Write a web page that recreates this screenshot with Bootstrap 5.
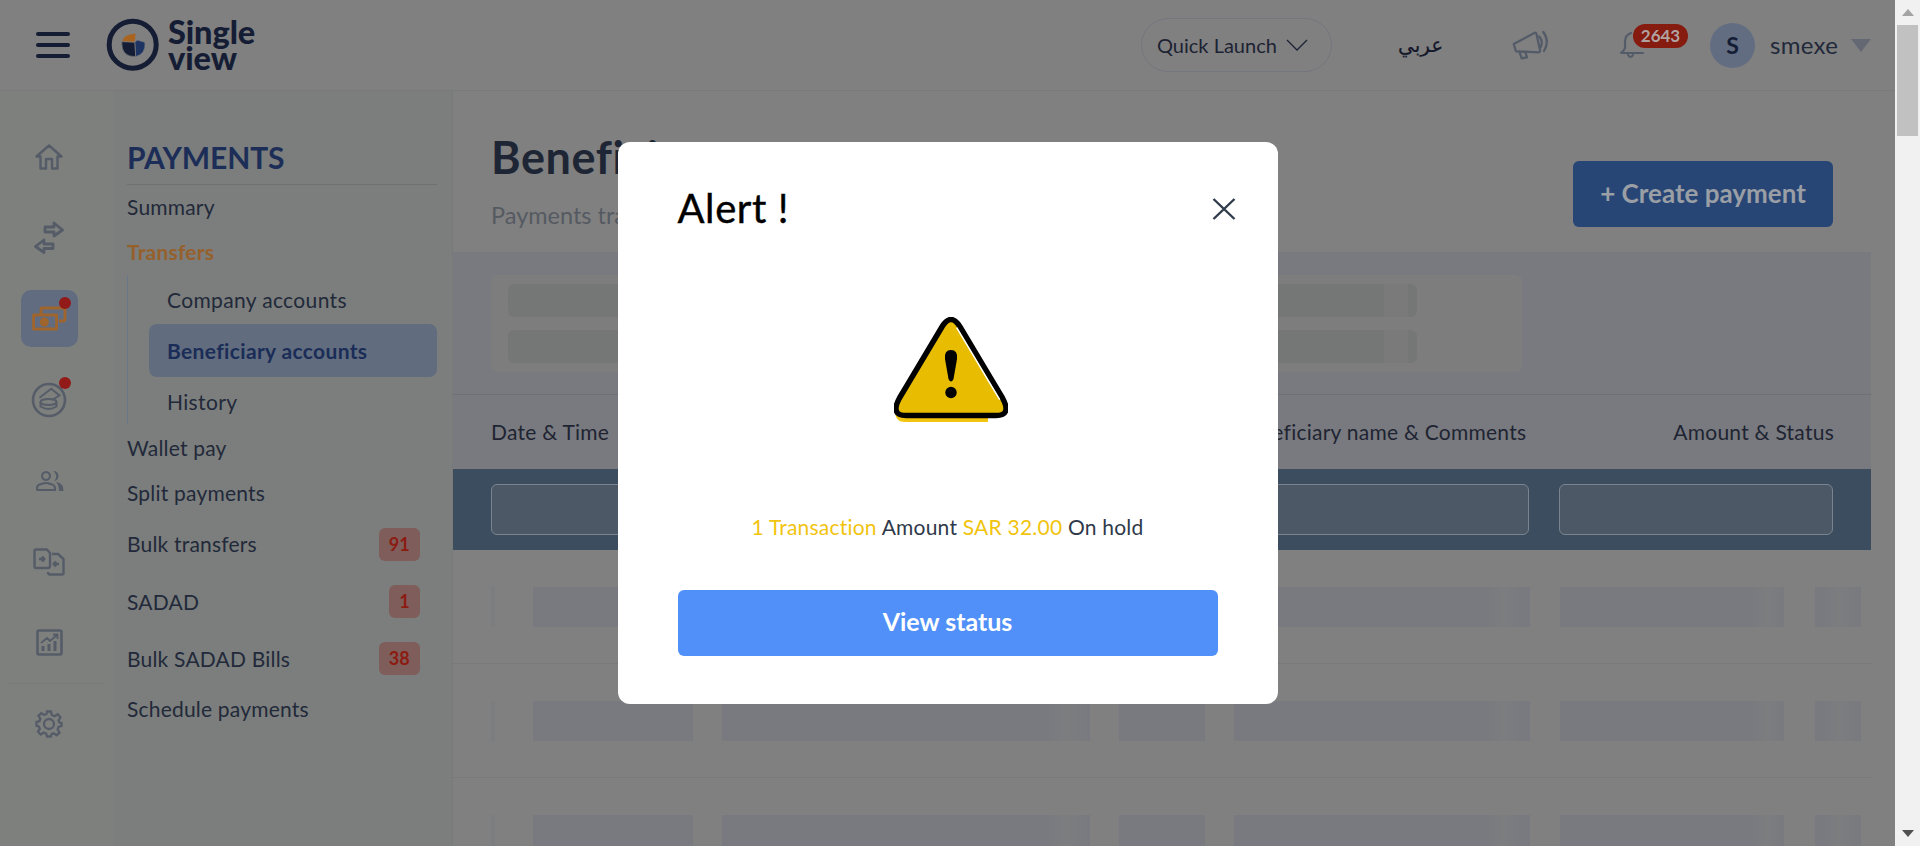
<!DOCTYPE html>
<html lang="en">
<head>
  <meta charset="UTF-8">
  <title>Beneficiary accounts</title>
  <link href="https://cdn.jsdelivr.net/npm/bootstrap@5.3.0/dist/css/bootstrap.min.css" rel="stylesheet">
  <style>
    html, body { height: 846px; overflow: hidden; }
    body { font-family: "Lato", "Open Sans", sans-serif; background: #808080; color: #22293a; }
    .app-frame { display: flex; height: 846px; }
    .app-page { width: 1895px; height: 846px; overflow: hidden; background: #808080; }

    /* fake browser scrollbar */
    .scroll-rail { width: 25px; background: #f1f1f1; display: flex; flex-direction: column; align-items: center; justify-content: space-between; padding: 9px 0; position: relative; }
    .scroll-thumb { position: absolute; top: 25px; left: 2px; width: 21px; height: 111px; background: #c1c1c1; }
    .arrow-up { width: 0; border: 6px solid transparent; border-top: 0; border-bottom: 7px solid #a3a3a3; }
    .arrow-down { width: 0; border: 6px solid transparent; border-bottom: 0; border-top: 7px solid #505050; }

    /* top bar */
    .top-bar { height: 91px; padding: 0; border-bottom: 1px solid #797b7b; background: #808080; flex-wrap: nowrap; justify-content: flex-start; }
    .burger { width: 34px; margin-left: 36px; display: flex; flex-direction: column; gap: 7px; }
    .burger span { height: 4px; border-radius: 2px; background: #151d35; }
    .brand-wrap { margin: 0 0 0 36px; gap: 8px; color: #151d35; padding: 0; }
    .brand-text { font-weight: 900; font-size: 32.5px; line-height: 26px; letter-spacing: -.1px; color: #151d35; }
    .quick-pill { width: 191px; height: 54px; margin-left: auto; border: 1px solid #74767e; border-radius: 27px; color: #1c2233; font-size: 20px; gap: 9px; padding: 0 0 0 15px; }
    .quick-pill:hover { color: #1c2233; border-color: #74767e; }
    .lang-link { margin-left: 66px; font-size: 20px; color: #14182a; font-family: "DejaVu Sans", sans-serif; width: 42px; text-align: center; text-decoration: none; -webkit-text-stroke: .2px #14182a; }
    .mega-icon { margin-left: 71px; }
    .bell-wrap { margin-left: 68px; width: 70px; height: 40px; padding-top: 6px; position: relative; }
    .bell-count { position: absolute; left: 14px; top: -1px; width: 55px; height: 24px; border-radius: 12px; background: #861b10; color: #b0a3a1; font-size: 17px; font-weight: 700; line-height: 24px; padding: 0; }
    .user-dot { width: 45px; height: 45px; margin-left: 21px; border-radius: 50%; background: #626d82; color: #151d35; font-weight: 700; font-size: 23px; }
    .user-name { margin-left: 15px; width: 68px; font-size: 24px; color: #22293a; letter-spacing: .3px; }
    .user-caret { margin-left: 13px; margin-right: 24px; width: 0; border: 10.5px solid transparent; border-bottom: 0; border-top: 13px solid #646873; }

    .under-bar { display: flex; height: 755px; }

    /* icon rail */
    .icon-rail { width: 113px; background: #7e807e; padding: 25px 15px 0 0; flex-shrink: 0; }
    .rail-slot { height: 81px; display: flex; align-items: center; justify-content: center; position: relative; }
    .rail-active { width: 57px; height: 57px; border-radius: 10px; background: #616c80; display: flex; align-items: center; justify-content: center; position: relative; }
    .red-dot { position: absolute; width: 12px; height: 12px; border-radius: 50%; background: #921a18; }
    .dot-money { top: 7px; right: 7px; }
    .dot-coin { top: 18px; left: 59px; }
    .rail-rule { margin: 0 -5px 0 9px; height: 1px; background: #787a78; }
    .rail-slot-last { height: 80px; }

    /* payments panel */
    .side-panel { width: 340px; background: #7b7e7c; padding: 0 15px 0 14px; border-right: 1px solid #787a7a; flex-shrink: 0; }
    .panel-title { height: 94px; margin: 0; padding-top: 48px; border-bottom: 1px solid #6e716f; font-size: 30px; font-weight: 700; line-height: 36px; color: #1c2e58; letter-spacing: -.1px; }
    .side-link { display: flex; align-items: center; font-size: 21px; color: #22293a; text-decoration: none; padding: 0; letter-spacing: .2px; }
    .side-link:hover, .side-link:focus { color: #22293a; }
    .h-44 { height: 44px; }
    .h-46 { height: 46px; }
    .h-57 { height: 57px; }
    .h-58 { height: 58px; }
    .side-link.is-open { color: #96602c; font-weight: 700; letter-spacing: .2px; }
    .sub-list { height: 150px; border-left: 1px solid #6a7689; padding-left: 21px; }
    .sub-list .side-link { padding-left: 18px; height: 49px; letter-spacing: .35px; }
    .sub-list .side-link.is-active { height: 53px; background: #616c7e; border-radius: 8px; color: #1a2c57; font-weight: 700; letter-spacing: .35px; }
    .count-tag { margin-left: auto; margin-right: 17px; height: 33px; padding: 0 10px; border-radius: 6px; background: #7f5d5a; color: #8c1b12; font-size: 18px; font-weight: 700; line-height: 33px; }

    /* main area */
    .main-pane { width: 1418px; flex-shrink: 0; background: #808080; }
    .page-head { height: 161px; padding: 0 38px; display: flex; justify-content: space-between; }
    .page-title { font-size: 45px; font-weight: 700; color: #1e2635; margin: 40px 0 0; line-height: 52px; letter-spacing: .6px; }
    .page-sub { font-size: 23.5px; color: #555a62; margin: 18px 0 0; line-height: 28px; }
    .create-btn { width: 260px; height: 66px; margin-top: 70px; padding-bottom: 8px; background: #284675; border: 0; border-radius: 6px; color: #9a9ea5; font-size: 26px; font-weight: 700; }
    .create-btn:hover { background: #284675; color: #9a9ea5; }
    .filter-band { height: 143px; background: #787a7f; padding: 23px 38px 0; border-bottom: 1px solid #6f7076; }
    .filter-box { width: 1031px; height: 97px; background: #7d7d7d; border-radius: 6px; padding: 9px 17px; display: flex; flex-direction: column; gap: 13px; }
    .filter-bar { width: 909px; height: 33px; border-radius: 6px; background: linear-gradient(90deg, #757676 0, #757676 876px, #7a7a7a 876px, #7a7a7a 900px, #757676 900px); }
    .head-row { height: 74px; background: #787a7f; padding: 0 37px 0 38px; display: flex; align-items: center; justify-content: space-between; font-size: 21px; color: #1f2432; letter-spacing: .25px; }
    .head-right { margin-left: auto; margin-right: 147px; }
    .search-band { height: 81px; background: #3c4d60; padding: 0 38px; display: flex; align-items: center; gap: 30px; }
    .search-band .form-control { height: 51px; background: #4c5866; border: 1px solid #7b848e; border-radius: 6px; }
    .search-band .form-control:focus { box-shadow: none; }
    .search-a { width: 1040px; }
    .search-b { width: 274px; }
    .data-row { height: 114px; border-bottom: 1px solid #797979; padding: 37px 0 0 38px; display: flex; }
    .skel { height: 40px; background: #797a7f; flex-shrink: 0; }
    .sk-a { width: 4px; margin-right: 38px; background: #7c7d7f; }
    .sk-b { width: 160px; margin-right: 29px; }
    .sk-c { width: 368px; margin-right: 29px; background: linear-gradient(90deg, #797a7f 88%, #7c7d7f 93%, #797a7f 100%); }
    .sk-d { width: 86px; margin-right: 29px; }
    .sk-e { width: 296px; margin-right: 30px; background: linear-gradient(90deg, #797a7f 85%, #7c7d7f 91%, #797a7f 97%); }
    .sk-f { width: 224px; margin-right: 31px; background: linear-gradient(90deg, #797a7f 85%, #7c7d7f 92%, #797a7f 100%); }
    .sk-g { width: 46px; background: linear-gradient(90deg, #797a7f 20%, #7c7d7f 50%, #797a7f 100%); }

    /* alert dialog */
    .alert-modal { width: 1895px; }
    .alert-modal .modal-dialog { max-width: 660px; margin: 142px auto 0; }
    .alert-modal .modal-content { height: 562px; border: 0; border-radius: 12px; background: #fff; padding: 0 60px 48px; }
    .alert-modal .modal-header { padding: 39px 0 0; border: 0; align-items: flex-start; }
    .alert-title { font-size: 40px; line-height: 54px; font-weight: 400; color: #000; -webkit-text-stroke: .4px #000; letter-spacing: .6px; }
    .close-x { background: none; border: 0; padding: 0; margin: 17px -18px 0 0; width: 24px; height: 22px; line-height: 0; }
    .alert-modal .modal-body { padding: 0; text-align: center; }
    .warn-icon { display: block; margin: 82px 0 0 216px; }
    .alert-msg { margin: 91px 0 0; font-size: 21px; line-height: 28px; color: #2f3a4a; letter-spacing: .22px; }
    .alert-msg b { font-weight: 400; color: #f1c40f; }
    .view-btn { height: 66px; margin-top: 49px; padding-bottom: 8px; background: #5190f8; border: 0; border-radius: 6px; color: #fff; font-size: 25px; font-weight: 700; }
    .view-btn:hover { background: #5190f8; color: #fff; }
  </style>
</head>
<body>

<div class="app-frame">
  <div class="app-page">

    <!-- Top bar -->
    <nav class="navbar top-bar">
      <div class="burger"><span></span><span></span><span></span></div>
      <a class="navbar-brand d-flex align-items-center brand-wrap" href="#">
        <svg width="54" height="54" viewBox="0 0 54 54">
          <circle cx="26.700" cy="26.700" r="23.500" fill="none" stroke="#151d35" stroke-width="5"/>
          <g stroke="#808080" stroke-width=".7">
            <path d="M15.700 23.700 Q17 16 30 15.300 L29 24.300 Z" fill="#a9651f"/>
            <path d="M15.700 23.700 L29 24.300 L29.700 38.700 Q15 39 15.700 23.700 Z" fill="#151d35"/>
            <path d="M29 24.300 L31.300 22 L39 24.300 Q40 36 29.700 38.700 Z" fill="#1e3564"/>
          </g>
        </svg>
        <span class="brand-text">Single<br>view</span>
      </a>
      <button class="btn quick-pill d-flex align-items-center" type="button">
        Quick Launch
        <svg width="22" height="12" viewBox="0 0 22 12"><path d="M1 1 L11 11 L21 1" fill="none" stroke="#1c2233" stroke-width="1.300"/></svg>
      </button>
      <a class="lang-link" href="#">عربي</a>
      <svg class="mega-icon" width="40" height="32" viewBox="0 0 40 32" fill="none" stroke="#545b68" stroke-width="2.300" stroke-linejoin="round" stroke-linecap="round">
        <path d="M2.700 15 L23.300 4 Q25 3 25.500 5 L29 21 Q29.300 23.500 27 23.300 L5 22.300 Z"/>
        <path d="M8.300 22.300 L10.700 29.300 L16 28.300 L14.300 23"/>
        <path d="M28.300 7.500 Q32.500 12.500 29.800 18"/>
        <path d="M32.300 3 Q39 12 33 22"/>
      </svg>
      <div class="bell-wrap">
        <svg width="26" height="28" viewBox="0 0 26 28" fill="none" stroke="#545b68" stroke-width="2.200" stroke-linejoin="round" stroke-linecap="round" class="d-block">
          <path d="M12 2 Q6 4 6 11 L6 17 Q5 20 2 22 L24 22"/>
          <path d="M9 24 Q11.500 28 14 24"/>
        </svg>
        <span class="badge bell-count">2643</span>
      </div>
      <div class="user-dot d-flex align-items-center justify-content-center">S</div>
      <span class="user-name">smexe</span>
      <span class="user-caret"></span>
    </nav>

    <div class="under-bar">
      <!-- Icon rail -->
      <div class="icon-rail">
        <div class="rail-slot">
          <svg width="28" height="26" viewBox="0 0 28 26" fill="none" stroke="#555c68" stroke-width="2.400" stroke-linejoin="round"><path d="M1.500 12.500 L14 1.500 L26.500 12.500 L22.500 12.500 L22.500 24.500 L17 24.500 L17 15 L11 15 L11 24.500 L5.500 24.500 L5.500 12.500 Z"/></svg>
        </div>
        <div class="rail-slot">
          <svg width="30" height="33" viewBox="0 0 30 33" fill="none" stroke="#555c68" stroke-width="2.800" stroke-linejoin="round"><path d="M11 6 L20 6 L20 2 L28.500 9 L20 15 L20 11 L11 11 Z"/><path d="M19 23 L10 23 L10 19 L1.500 25.500 L10 31.500 L10 27.500 L19 27.500 Z"/></svg>
        </div>
        <div class="rail-slot">
          <div class="rail-active">
            <svg width="35" height="25" viewBox="0 0 35 25" fill="none" stroke="#a0652c" stroke-width="2.800" stroke-linejoin="round"><rect x="1.600" y="9" width="23" height="14"/><circle cx="12.300" cy="16" r="4.500" fill="#a0652c" stroke="none"/><path d="M9 9 L9 3 Q9 2 10 2 L32 2 Q33 2 33 3 L33 13 Q33 15 31 15 L27 15"/></svg>
            <span class="red-dot dot-money"></span>
          </div>
        </div>
        <div class="rail-slot">
          <svg width="36" height="36" viewBox="0 0 36 36" fill="none" stroke="#565d69" stroke-width="2.600"><circle cx="18" cy="18" r="16"/><path d="M8.500 15.800 L20.200 6.800 L28.500 13.500 L21 18" stroke-width="2"/><ellipse cx="17.500" cy="20" rx="8" ry="3" stroke-width="2"/><path d="M9.500 20 L9.500 24.500 Q17.500 29.500 25.500 24.500 L25.500 20" stroke-width="2"/></svg>
          <span class="red-dot dot-coin"></span>
        </div>
        <div class="rail-slot">
          <svg width="29" height="22" viewBox="0 0 29 22" fill="#555c68"><path d="M11 1 a5 5 0 1 1 -.01 0 Z M11 3 a3 3 0 1 0 .01 0 Z" fill-rule="evenodd"/><path d="M1 20 Q0 14 6 13 Q11 11 16 13 Q22 14 21 21 L2 21 Z M3 19 L19 19 Q19 15 15 15 Q11 13 7 15 Q3 15 3 19 Z" fill-rule="evenodd"/><path d="M18 1 a5 5 0 0 1 1 10 Q22 8 21 5 Q20 2 18 1 Z"/><path d="M21 12 Q29 13 28.500 21 L24 21 Q24 15 21 12 Z"/></svg>
        </div>
        <div class="rail-slot">
          <svg width="32" height="28" viewBox="0 0 32 28" fill="none" stroke="#555c68" stroke-width="2.400" stroke-linejoin="round"><path d="M3 1.500 L14 1.500 L17 5 L17 18 Q17 20 15 20 L3 20 Q1.500 20 1.500 18 L1.500 3 Q1.500 1.500 3 1.500 Z"/><path d="M19 6 L25 6 L30.500 11 L30.500 25 Q30.500 26.500 29 26.500 L17 26.500 Q15 26.500 15 24"/><path d="M6 11 L11 11 M9 8.500 L11.500 11 L9 13.500"/><path d="M26 16 L21 16 M23 13.500 L20.500 16 L23 18.500"/></svg>
        </div>
        <div class="rail-slot">
          <svg width="27" height="27" viewBox="0 0 27 27" fill="none" stroke="#555c68" stroke-width="2.600" stroke-linejoin="round"><rect x="1.500" y="1.500" width="24" height="24" rx="1.500"/><path d="M5 14 L11 9 L14 12 L21 6 M17 5.500 L21.500 5.500 L21.500 10" stroke-width="1.800"/><path d="M7 22 L7 17 M13 22 L13 15 M19 22 L19 12" stroke-width="3"/></svg>
        </div>
        <div class="rail-rule"></div>
        <div class="rail-slot rail-slot-last">
          <svg width="28" height="28" viewBox="0 0 28 28" fill="none" stroke="#555c68" stroke-width="2.300"><circle cx="14" cy="14" r="5"/><path d="M12 1.500 L16 1.500 L16.800 5 L19.500 6.200 L22.700 4.300 L25.500 7.300 L23.500 10.300 L24.500 12.500 L26.500 13 L26.500 16 L23.500 17 L22.700 19.500 L24.500 22.700 L21.700 25.200 L18.800 23.300 L16.500 24.200 L15.800 26.500 L12 26.500 L11.200 23.500 L8.800 22.600 L5.700 24.500 L3 21.700 L4.800 18.800 L3.800 16.500 L1.500 15.800 L1.500 12 L4.500 11.200 L5.400 8.800 L3.500 5.800 L6.300 3.200 L9.300 5 L11.500 4 Z"/></svg>
        </div>
      </div>

      <!-- Payments panel -->
      <div class="side-panel">
        <h2 class="panel-title">PAYMENTS</h2>
        <a class="side-link h-44" href="#">Summary</a>
        <a class="side-link is-open h-46" href="#">Transfers</a>
        <div class="sub-list">
          <a class="side-link" href="#">Company accounts</a>
          <a class="side-link is-active" href="#">Beneficiary accounts</a>
          <a class="side-link" href="#">History</a>
        </div>
        <a class="side-link h-46" href="#">Wallet pay</a>
        <a class="side-link h-44" href="#">Split payments</a>
        <a class="side-link h-58" href="#">Bulk transfers <span class="count-tag">91</span></a>
        <a class="side-link h-57" href="#">SADAD <span class="count-tag">1</span></a>
        <a class="side-link h-57" href="#">Bulk SADAD Bills <span class="count-tag">38</span></a>
        <a class="side-link h-44" href="#">Schedule payments</a>
      </div>

      <!-- Main -->
      <div class="main-pane">
        <div class="page-head">
          <div>
            <h1 class="page-title">Beneficiary accounts</h1>
            <p class="page-sub">Payments transfers</p>
          </div>
          <button class="btn create-btn" type="button">+ Create payment</button>
        </div>
        <div class="filter-band">
          <div class="filter-box">
            <div class="filter-bar"></div>
            <div class="filter-bar"></div>
          </div>
        </div>
        <div class="head-row">
          <span>Date &amp; Time</span>
          <span class="head-right">Beneficiary name &amp; Comments</span>
          <span>Amount &amp; Status</span>
        </div>
        <div class="search-band">
          <input class="form-control search-a" type="text" aria-label="Search">
          <input class="form-control search-b" type="text" aria-label="Amount">
        </div>
        <div class="data-row"><div class="skel sk-a"></div><div class="skel sk-b"></div><div class="skel sk-c"></div><div class="skel sk-d"></div><div class="skel sk-e"></div><div class="skel sk-f"></div><div class="skel sk-g"></div></div>
        <div class="data-row"><div class="skel sk-a"></div><div class="skel sk-b"></div><div class="skel sk-c"></div><div class="skel sk-d"></div><div class="skel sk-e"></div><div class="skel sk-f"></div><div class="skel sk-g"></div></div>
        <div class="data-row"><div class="skel sk-a"></div><div class="skel sk-b"></div><div class="skel sk-c"></div><div class="skel sk-d"></div><div class="skel sk-e"></div><div class="skel sk-f"></div><div class="skel sk-g"></div></div>
      </div>
    </div>
  </div>

  <!-- Scrollbar -->
  <div class="scroll-rail">
    <span class="arrow-up"></span>
    <span class="scroll-thumb"></span>
    <span class="arrow-down"></span>
  </div>
</div>

<!-- Alert dialog -->
<div class="modal d-block alert-modal" tabindex="-1" role="dialog">
  <div class="modal-dialog">
    <div class="modal-content">
      <div class="modal-header">
        <h5 class="modal-title alert-title">Alert !</h5>
        <button class="close-x" type="button" aria-label="Close">
          <svg width="24" height="22" viewBox="0 0 24 22"><path d="M1.500 1 L22.500 21 M22.500 1 L1.500 21" stroke="#2f3a4a" stroke-width="2.400" fill="none"/></svg>
        </button>
      </div>
      <div class="modal-body">
        <svg class="warn-icon" width="114" height="105" viewBox="0 0 114 105">
          <path d="M1 91 Q0 105 11 105 L94 105 L94 98 Z" fill="#f1c40f"/>
          <path d="M48.500 9 Q57 -4 65.500 9 L108.500 81 Q118 98.500 102 98.500 L12 98.500 Q-4 98.500 5.500 81 Z" fill="#e8bc00" stroke="#000" stroke-width="5.500" stroke-linejoin="round"/>
          <path d="M62.700 10.700 L105.700 82.700" stroke="#fff" stroke-width="1.500" fill="none"/>
          <path d="M57 33 Q64 33 63 42 L59.500 62 Q57 67 54.500 62 L51 42 Q50 33 57 33 Z" fill="#000"/>
          <circle cx="57" cy="75.500" r="5.700" fill="#000"/>
        </svg>
        <p class="alert-msg"><b>1 Transaction</b> Amount <b>SAR 32.00</b> On hold</p>
        <button class="btn view-btn w-100" type="button">View status</button>
      </div>
    </div>
  </div>
</div>

<script src="https://cdn.jsdelivr.net/npm/bootstrap@5.3.0/dist/js/bootstrap.bundle.min.js"></script>
</body>
</html>
